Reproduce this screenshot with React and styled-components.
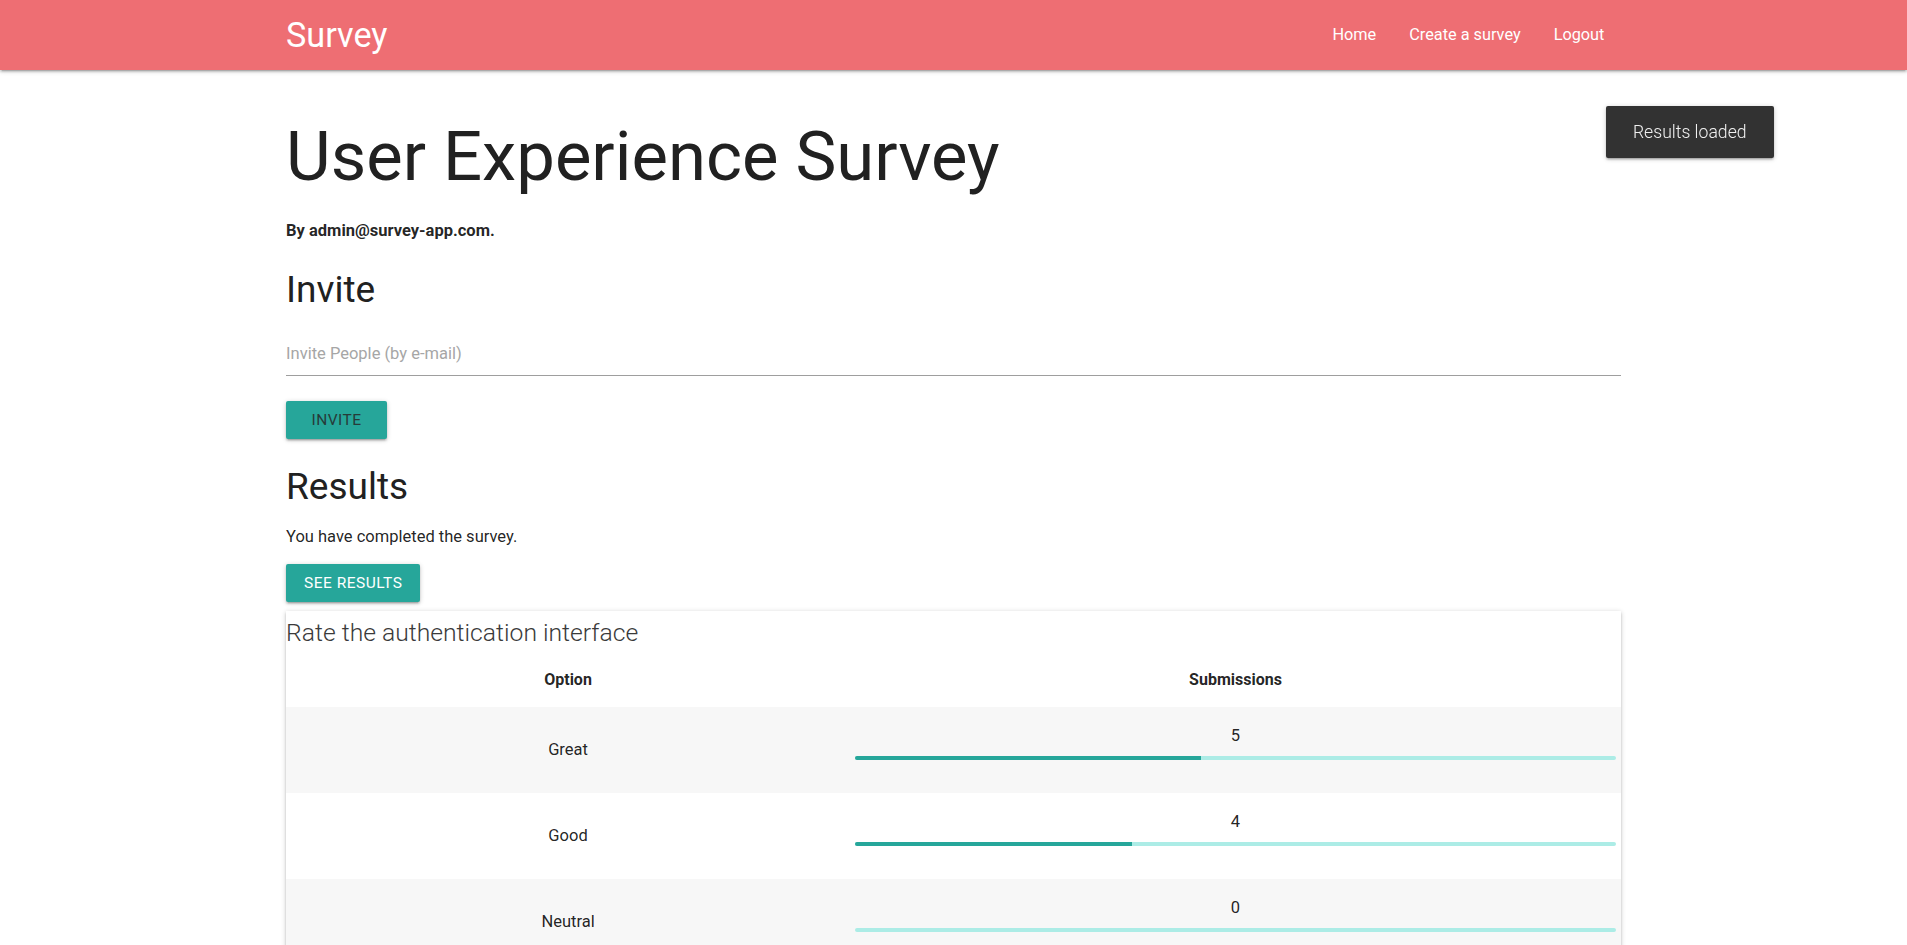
import React from "react";
import styled, { createGlobalStyle } from "styled-components";

const GlobalStyle = createGlobalStyle`
  html, body { margin: 0; padding: 0; }
  body {
    font-family: Roboto, "Liberation Sans", sans-serif;
    font-size: 16.5px;
    line-height: 24px;
    color: rgba(0, 0, 0, 0.87);
    background: #fff;
  }
  * { box-sizing: border-box; }
`;

const shadow = "0 2px 2px 0 rgba(0,0,0,0.14), 0 3px 1px -2px rgba(0,0,0,0.12), 0 1px 5px 0 rgba(0,0,0,0.2)";

const NavBar = styled.nav`
  height: 70px;
  background: #ee6e73;
  color: #fff;
  box-shadow: ${shadow};
`;

const Container = styled.div`
  width: 70%;
  margin: 0 auto;
`;

const NavInner = styled(Container)`
  height: 100%;
  display: flex;
  align-items: center;
  justify-content: space-between;
`;

const Brand = styled.a`
  font-size: 34.2px;
  font-weight: 400;
  line-height: 70px;
  color: #fff;
  text-decoration: none;
`;

const NavLinks = styled.ul`
  list-style: none;
  display: flex;
  margin: 0;
  padding: 0;
`;

const NavLink = styled.a`
  display: block;
  padding: 0 16.5px;
  font-size: 16.3px;
  line-height: 70px;
  color: #fff;
  text-decoration: none;
`;

const Title = styled.h1`
  font-size: 68.8px;
  line-height: 76px;
  font-weight: 400;
  margin: 49px 0 24px;
  color: #212121;
`;

const Author = styled.p`
  margin: 0;
  font-weight: 700;
  font-size: 16.5px;
  line-height: 24px;
`;

const SectionTitle = styled.h4`
  font-size: 37px;
  line-height: 40px;
  font-weight: 400;
  margin: ${(p) => p.$top}px 0 0;
  color: #212121;
`;

const Input = styled.input`
  display: block;
  width: 100%;
  height: 45px;
  margin-top: 21px;
  padding: 0;
  border: none;
  border-bottom: 1px solid #9e9e9e;
  outline: none;
  font-family: inherit;
  font-size: 16.5px;
  background: transparent;
  &::placeholder { color: #a6a6a6; }
`;

const Button = styled.button`
  display: block;
  height: 38px;
  width: ${(p) => (p.$width ? `${p.$width}px` : "auto")};
  margin-top: ${(p) => p.$top}px;
  padding: 0 18px;
  border: none;
  border-radius: 2px;
  background: #26a69a;
  color: ${(p) => (p.$dark ? "#263b39" : "#fff")};
  font-family: inherit;
  font-size: 15.5px;
  letter-spacing: 0.5px;
  text-transform: uppercase;
  box-shadow: ${shadow};
`;

const Text = styled.p`
  margin: 18px 0 0;
`;

const Card = styled.div`
  margin-top: 9px;
  padding-top: 6px;
  background: #fff;
  box-shadow: ${shadow};
`;

const CardTitle = styled.div`
  font-size: 24.7px;
  font-weight: 300;
  line-height: 32px;
  color: #3a3a3a;
`;

const Table = styled.table`
  width: 100%;
  border-collapse: collapse;
`;

const Th = styled.th`
  width: ${(p) => p.$width || "auto"};
  padding: 18px 5px 15px;
  line-height: 25px;
  font-size: 16px;
  font-weight: 700;
  text-align: center;
`;

const Row = styled.tr`
  background: ${(p) => (p.$striped ? "#f7f7f7" : "#fff")};
`;

const Td = styled.td`
  padding: 15px 5px;
  text-align: center;
  vertical-align: middle;
  height: 86px;
`;

const Count = styled.div`
  line-height: 28px;
`;

const Track = styled.div`
  height: 4px;
  margin: 6px 0 18px;
  border-radius: 2px;
  background: #acece6;
  overflow: hidden;
`;

const Fill = styled.div`
  height: 100%;
  background: #26a69a;
`;

const ToastContainer = styled.div`
  position: fixed;
  top: 10%;
  right: 7%;
`;

const Toast = styled.div`
  margin-top: 11px;
  min-height: 52px;
  padding: 0 27px;
  display: flex;
  align-items: center;
  background: #323232;
  color: #f0f0f0;
  border-radius: 2px;
  font-size: 17.6px;
  font-weight: 300;
  box-shadow: ${shadow};
`;

const results = [
  { option: "Great", count: 5 },
  { option: "Good", count: 4 },
  { option: "Neutral", count: 0 },
  { option: "Bad", count: 1 },
  { option: "Terrible", count: 1 },
];
const total = results.reduce((s, r) => s + r.count, 0);

export default function App() {
  return (
    <>
      <GlobalStyle />
      <NavBar>
        <NavInner>
          <Brand href="#">Survey</Brand>
          <NavLinks>
            <li><NavLink href="#">Home</NavLink></li>
            <li><NavLink href="#">Create a survey</NavLink></li>
            <li><NavLink href="#">Logout</NavLink></li>
          </NavLinks>
        </NavInner>
      </NavBar>
      <Container>
        <Title>User Experience Survey</Title>
        <Author>By admin@survey-app.com.</Author>
        <SectionTitle $top={27}>Invite</SectionTitle>
        <Input placeholder="Invite People (by e-mail)" />
        <Button $top={25} $width={101} $dark>Invite</Button>
        <SectionTitle $top={28}>Results</SectionTitle>
        <Text>You have completed the survey.</Text>
        <Button $top={15}>See results</Button>
        <Card>
          <CardTitle>Rate the authentication interface</CardTitle>
          <Table>
            <thead>
              <tr>
                <Th $width="42.25%">Option</Th>
                <Th>Submissions</Th>
              </tr>
            </thead>
            <tbody>
              {results.map((r, i) => (
                <Row key={r.option} $striped={i % 2 === 0}>
                  <Td>{r.option}</Td>
                  <Td>
                    <Count>{r.count}</Count>
                    <Track>
                      <Fill style={{ width: `${(r.count / total) * 100}%` }} />
                    </Track>
                  </Td>
                </Row>
              ))}
            </tbody>
          </Table>
        </Card>
      </Container>
      <ToastContainer>
        <Toast>Results loaded</Toast>
      </ToastContainer>
    </>
  );
}
